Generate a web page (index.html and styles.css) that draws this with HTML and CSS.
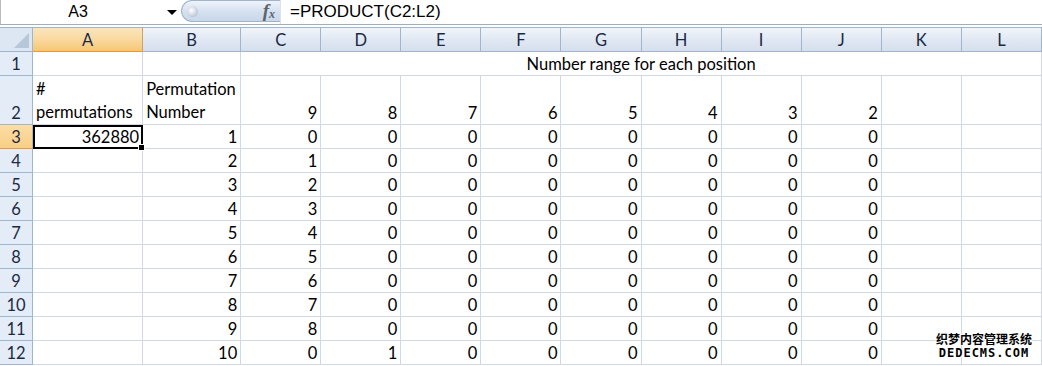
FILE: index.html
```html
<!DOCTYPE html>
<html lang="en">
<head>
    <meta charset="UTF-8">
    <title>Permutations</title>
    <link rel="stylesheet" href="styles.css">
</head>
<body>
    <div class="formula-bar">
        <div class="name-box">
            <span class="cell-ref">A3</span>
            <span class="drop-arrow"></span>
        </div>
        <div class="fx-pill">
            <span class="knob"></span>
            <span class="fx"><i>f</i><span class="sub">x</span></span>
        </div>
        <div class="formula">=PRODUCT(C2:L2)</div>
    </div>

    <table class="sheet">
        <colgroup>
            <col class="c-row"><col class="c-a"><col class="c-b">
            <col class="c-n"><col class="c-n"><col class="c-n"><col class="c-n"><col class="c-n">
            <col class="c-n"><col class="c-n"><col class="c-n"><col class="c-n"><col class="c-n">
        </colgroup>
        <thead>
            <tr class="head">
                <th class="corner"><span class="tri"></span></th>
                <th class="sel">A</th><th>B</th><th>C</th><th>D</th><th>E</th><th>F</th>
                <th>G</th><th>H</th><th>I</th><th>J</th><th>K</th><th>L</th>
            </tr>
        </thead>
        <tbody id="rows">
            <tr>
                <th class="rh">1</th><td></td><td></td>
                <td class="merged" colspan="10">Number range for each position</td>
            </tr>
            <tr class="tall">
                <th class="rh">2</th>
                <td class="txt">#<br>permutations</td>
                <td class="txt">Permutation<br>Number</td>
                <td>9</td><td>8</td><td>7</td><td>6</td><td>5</td><td>4</td><td>3</td><td>2</td><td></td><td></td>
            </tr>
        </tbody>
    </table>

    <div class="watermark">
        <div class="wm-cn">织梦内容管理系统</div>
        <div class="wm-en">DEDECMS.COM</div>
    </div>

    <script>
        // rows 3..12
        var colC = [0, 1, 2, 3, 4, 5, 6, 7, 8, 0];
        var colD = [0, 0, 0, 0, 0, 0, 0, 0, 0, 1];
        var body = document.getElementById('rows');
        for (var i = 0; i < 10; i++) {
            var r = i + 3;
            var html = '<th class="rh' + (r === 3 ? ' sel' : '') + '">' + r + '</th>';
            html += r === 3 ? '<td class="active">362880<span class="handle"></span></td>' : '<td></td>';
            html += '<td>' + (i + 1) + '</td>';
            html += '<td>' + colC[i] + '</td><td>' + colD[i] + '</td>';
            for (var j = 0; j < 6; j++) html += '<td>0</td>';
            html += '<td></td><td></td>';
            var tr = document.createElement('tr');
            tr.innerHTML = html;
            body.appendChild(tr);
        }
    </script>
</body>
</html>
```

FILE: styles.css
```css
body {
    margin: 0;
    background: #fff;
    font-family: Lato, "Open Sans", sans-serif;
    font-size: 16.5px;
    color: #000;
    overflow: hidden;
}

/* formula bar */
.formula-bar {
    display: flex;
    height: 24px;
    border-bottom: 1px solid #a5acb5;
    margin-bottom: 2px;
}
.name-box {
    width: 180px;
    display: flex;
    align-items: center;
    border-left: 1px solid #b7bcc3;
    position: relative;
}
.cell-ref {
    width: 150px;
    text-align: center;
    font-family: "Liberation Sans", Arial, sans-serif;
    font-size: 16px;
    padding-left: 2px;
}
.drop-arrow {
    width: 0;
    height: 0;
    border-left: 5px solid transparent;
    border-right: 5px solid transparent;
    border-top: 5px solid #000;
    margin-left: 14px;
}
.fx-pill {
    width: 99px;
    height: 22px;
    box-sizing: border-box;
    border: 1px solid #9fb3cc;
    border-right: none;
    border-radius: 12px 0 0 12px;
    background: linear-gradient(#eef3fa, #d4e0ef 55%, #c8d7ea);
    display: flex;
    align-items: center;
    justify-content: space-between;
    padding: 0 5px 0 5px;
}
.knob {
    width: 11px;
    height: 11px;
    border-radius: 50%;
    background: radial-gradient(circle at 40% 40%, #ffffff, #c9d1dc 60%, #9ca9ba);
}
.fx {
    font-family: "Liberation Serif", serif;
    color: #5d626b;
    font-size: 19px;
    font-weight: bold;
}
.fx i {
    font-style: italic;
}
.fx .sub {
    font-size: 12px;
    font-style: italic;
    position: relative;
    top: 1px;
}
.formula {
    flex: 1;
    padding-left: 9px;
    line-height: 24px;
    border-left: 1px solid #dfe3e8;
    font-family: "Liberation Sans", Arial, sans-serif;
    font-size: 17px;
}

/* grid */
.sheet {
    border-collapse: separate;
    border-spacing: 0;
    table-layout: fixed;
    width: 1042px;
}
.c-row { width: 33px; }
.c-a { width: 110px; }
.c-b { width: 98px; }
.c-n { width: 80px; }

.sheet th, .sheet td {
    padding: 0 3px;
    white-space: nowrap;
    overflow: visible;
    box-sizing: border-box;
}
.sheet td {
    border-right: 1px solid #d0d7e5;
    border-bottom: 1px solid #d0d7e5;
    text-align: right;
    vertical-align: bottom;
    line-height: 21px;
}
.sheet tbody tr { height: 24px; }
.sheet tbody tr.tall { height: 49px; }

.head th {
    height: 25px;
    border-top: 1px solid #9eb6ce;
    border-right: 1px solid #9eb6ce;
    border-bottom: 1px solid #9eb6ce;
    background: linear-gradient(#f1f5fb, #dfe7f2 55%, #d5dfec);
    font-weight: normal;
    color: #1b2a44;
    text-align: center;
    font-size: 16.5px;
}
.head th.sel {
    background: linear-gradient(#fbe5bd, #f9d99f 50%, #f5c774);
    border-bottom: 1px solid #f29536;
    border-right: 1px solid #c9a36a;
}
.head th.corner {
    position: relative;
    background: #dde7f4;
}
.tri {
    position: absolute;
    right: 3px;
    bottom: 3px;
    width: 0;
    height: 0;
    border-left: 15px solid transparent;
    border-bottom: 15px solid #b8c6d9;
}

.rh {
    background: #e4ecf7;
    border-right: 1px solid #9eb6ce;
    border-bottom: 1px solid #9eb6ce;
    font-weight: normal;
    color: #1b2a44;
    text-align: center;
    vertical-align: bottom;
    line-height: 21px;
}
.rh.sel {
    background: linear-gradient(#fcdda4, #f8cf86);
    border-bottom-color: #f29536;
}

.sheet td.txt {
    text-align: left;
    white-space: normal;
    line-height: 23px;
}
.sheet td.merged {
    text-align: center;
    vertical-align: bottom;
}
.sheet td.active {
    position: relative;
    outline: 2px solid #000;
    outline-offset: -2px;
}
.handle {
    position: absolute;
    right: -3px;
    bottom: -3px;
    width: 5px;
    height: 5px;
    background: #000;
    border: 1px solid #fff;
}

/* watermark */
.watermark {
    position: absolute;
    left: 932px;
    top: 331px;
    width: 104px;
    text-align: center;
    color: #000;
    text-shadow: 1px 0 #fff, -1px 0 #fff, 0 1px #fff, 0 -1px #fff, 1px 1px #fff, -1px -1px #fff;
    font-weight: bold;
}
.wm-cn {
    font-family: "Noto Sans CJK SC", sans-serif;
    font-size: 12px;
    line-height: 15px;
}
.wm-en {
    font-family: "DejaVu Sans Mono", monospace;
    font-size: 12px;
    letter-spacing: 1px;
    line-height: 15px;
}
```
